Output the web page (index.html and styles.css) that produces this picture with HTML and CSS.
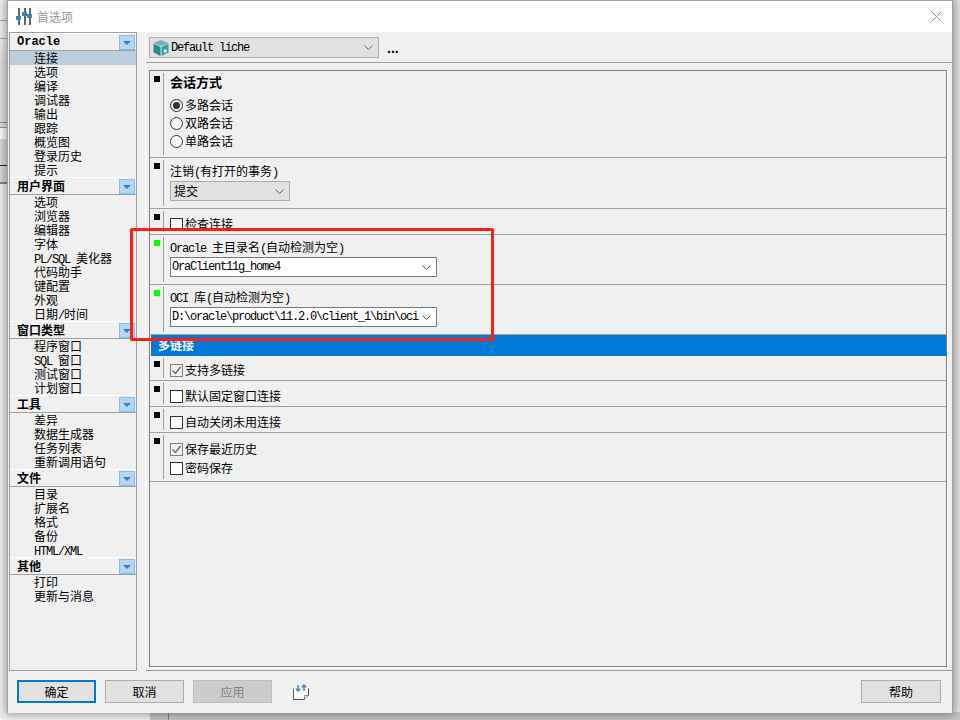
FILE: index.html
```html
<!DOCTYPE html>
<html lang="zh">
<head>
<meta charset="utf-8">
<title>首选项</title>
<link rel="stylesheet" href="styles.css">
</head>
<body>
<div class="dialog">
  <header class="titlebar">
    <svg class="title-icon" width="16" height="17" viewBox="0 0 16 17">
      <rect x="2" y="0" width="2" height="17" fill="#666"/>
      <rect x="8" y="0" width="2" height="17" fill="#666"/>
      <rect x="13" y="0" width="2" height="17" fill="#666"/>
      <rect x="0" y="8" width="5" height="4" fill="#3f7fc1"/>
      <rect x="6" y="4" width="5" height="4" fill="#3f7fc1"/>
      <rect x="11" y="6" width="5" height="4" fill="#3f7fc1"/>
    </svg>
    <span class="title-text">首选项</span>
    <svg class="close" width="11" height="11" viewBox="0 0 11 11"><path d="M.5.5l10 10M10.5.5l-10 10" stroke="#8a8a8a" fill="none"/></svg>
  </header>
  <div class="main">
    <nav class="side">
      <div class="side-head"><b class="lat-b">Oracle</b><i class="fold"></i></div>
      <div class="side-item current">连接</div>
      <div class="side-item">选项</div>
      <div class="side-item">编译</div>
      <div class="side-item">调试器</div>
      <div class="side-item">输出</div>
      <div class="side-item">跟踪</div>
      <div class="side-item">概览图</div>
      <div class="side-item">登录历史</div>
      <div class="side-item">提示</div>
      <div class="side-head"><b>用户界面</b><i class="fold"></i></div>
      <div class="side-item">选项</div>
      <div class="side-item">浏览器</div>
      <div class="side-item">编辑器</div>
      <div class="side-item">字体</div>
      <div class="side-item"><span class="lat">PL/SQL </span>美化器</div>
      <div class="side-item">代码助手</div>
      <div class="side-item">键配置</div>
      <div class="side-item">外观</div>
      <div class="side-item">日期<span class="lat">/</span>时间</div>
      <div class="side-head"><b>窗口类型</b><i class="fold"></i></div>
      <div class="side-item">程序窗口</div>
      <div class="side-item"><span class="lat">SQL </span>窗口</div>
      <div class="side-item">测试窗口</div>
      <div class="side-item">计划窗口</div>
      <div class="side-head"><b>工具</b><i class="fold"></i></div>
      <div class="side-item">差异</div>
      <div class="side-item">数据生成器</div>
      <div class="side-item">任务列表</div>
      <div class="side-item">重新调用语句</div>
      <div class="side-head"><b>文件</b><i class="fold"></i></div>
      <div class="side-item">目录</div>
      <div class="side-item">扩展名</div>
      <div class="side-item">格式</div>
      <div class="side-item">备份</div>
      <div class="side-item"><span class="lat">HTML/XML</span></div>
      <div class="side-head"><b>其他</b><i class="fold"></i></div>
      <div class="side-item">打印</div>
      <div class="side-item">更新与消息</div>
    </nav>
    <section class="panel">
      <div class="toolbar">
        <div class="select profile">
          <svg class="cube" width="16" height="16" viewBox="0 0 16 16">
            <path d="M8 0l7.5 3L8 6.2.5 3z" fill="#6fb5b8"/>
            <path d="M.5 3.6L7.5 7v9L.5 12.6z" fill="#2f8a90"/>
            <path d="M15.5 3.6L8.5 7v9l7-3.4z" fill="#3f9ea3"/>
            <path d="M11 9.5h2.5v3H11z" fill="#e8f4f4"/>
          </svg>
          <span class="lat">Default liche</span>
          <svg class="chev" width="9" height="5" viewBox="0 0 9 5"><path d="M.5.5l4 4 4-4" stroke="#666" fill="none"/></svg>
        </div>
        <b class="dots">...</b>
      </div>
      <div class="group">
        <div class="sec sec-session">
          <div class="mark"></div>
          <div class="body">
            <div class="sec-title">会话方式</div>
            <div class="radio-row"><i class="radio on"></i>多路会话</div>
            <div class="radio-row"><i class="radio"></i>双路会话</div>
            <div class="radio-row"><i class="radio"></i>单路会话</div>
          </div>
        </div>
        <div class="sec sec-logoff">
          <div class="mark"></div>
          <div class="body">
            <div class="label">注销<span class="lat">(</span>有打开的事务<span class="lat">)</span></div>
            <div class="select logoff"><span>提交</span>
              <svg class="chev" width="9" height="5" viewBox="0 0 9 5"><path d="M.5.5l4 4 4-4" stroke="#555" fill="none"/></svg>
            </div>
          </div>
        </div>
        <div class="sec sec-check">
          <div class="mark"></div>
          <div class="body">
            <div class="check-row"><i class="check"></i>检查连接</div>
          </div>
        </div>
        <div class="sec sec-path">
          <div class="mark green"></div>
          <div class="body">
            <div class="label"><span class="lat">Oracle </span>主目录名<span class="lat">(</span>自动检测为空<span class="lat">)</span></div>
            <div class="input"><span class="lat">OraClient11g_home4</span>
              <svg class="chev" width="9" height="5" viewBox="0 0 9 5"><path d="M.5.5l4 4 4-4" stroke="#555" fill="none"/></svg>
            </div>
          </div>
        </div>
        <div class="sec sec-path">
          <div class="mark green"></div>
          <div class="body">
            <div class="label"><span class="lat">OCI </span>库<span class="lat">(</span>自动检测为空<span class="lat">)</span></div>
            <div class="input"><span class="lat">D:\oracle\product\11.2.0\client_1\bin\oci</span>
              <svg class="chev" width="9" height="5" viewBox="0 0 9 5"><path d="M.5.5l4 4 4-4" stroke="#555" fill="none"/></svg>
            </div>
          </div>
        </div>
        <div class="bar">多链接</div>
        <div class="sec sec-one">
          <div class="mark"></div>
          <div class="body">
            <div class="check-row"><i class="check on"><svg width="11" height="11" viewBox="0 0 11 11"><path d="M1.5 5.5l3 3 5-6.5" stroke="#666" stroke-width="1.3" fill="none"/></svg></i>支持多链接</div>
          </div>
        </div>
        <div class="sec sec-two">
          <div class="mark"></div>
          <div class="body">
            <div class="check-row"><i class="check"></i>默认固定窗口连接</div>
          </div>
        </div>
        <div class="sec sec-two">
          <div class="mark"></div>
          <div class="body">
            <div class="check-row"><i class="check"></i>自动关闭未用连接</div>
          </div>
        </div>
        <div class="sec sec-history">
          <div class="mark"></div>
          <div class="body">
            <div class="check-row"><i class="check on"><svg width="11" height="11" viewBox="0 0 11 11"><path d="M1.5 5.5l3 3 5-6.5" stroke="#666" stroke-width="1.3" fill="none"/></svg></i>保存最近历史</div>
            <div class="check-row second"><i class="check"></i>密码保存</div>
          </div>
        </div>
      </div>
    </section>
  </div>
  <footer class="footer">
    <button class="btn primary">确定</button>
    <button class="btn">取消</button>
    <button class="btn disabled">应用</button>
    <svg class="save-icon" width="16" height="16" viewBox="0 0 16 16">
      <path d="M.5 4.5v11h11l4-4v-7" stroke="#555" fill="#fff"/>
      <path d="M11.5 15.5v-4h4" stroke="#888" fill="#eee"/>
      <path d="M5 1v6M2.8 4.6L5 7l2.2-2.4" stroke="#3f7fc1" stroke-width="1.4" fill="none"/>
      <path d="M11 7V1M8.8 3.4L11 1l2.2 2.4" stroke="#3f7fc1" stroke-width="1.4" fill="none"/>
    </svg>
    <button class="btn help">帮助</button>
  </footer>
</div>
<div class="annotation"></div>
</body>
</html>
```

FILE: styles.css
```css
* { box-sizing: border-box; }
html, body { margin: 0; height: 720px; overflow: hidden; }
body {
  font: 12px/14px "Noto Sans CJK SC", sans-serif;
  color: #000;
  background:
    linear-gradient(to bottom,
      transparent 20px, #aaa 20px, #aaa 21px, transparent 21px,
      transparent 38px, #aaa 38px, #aaa 39px, transparent 39px,
      #e4e4e4 62px, #e4e4e4 122px, #999 122px, #999 123px, #e4e4e4 123px,
      #e4e4e4 127px, #999 127px, #999 128px, #fff 128px,
      #fff 139px, #ddd 139px, #ddd 165px, #222 165px, #222 166px, #ddd 166px,
      #ddd 182px, #888 182px, #888 184px, #f4f4f4 184px) 0 0 / 8px 100% no-repeat,
    linear-gradient(#888, #888) 168px 712px / 1px 8px no-repeat,
    linear-gradient(#c8c8c8, #c8c8c8) 150px 712px / 810px 8px no-repeat,
    linear-gradient(#e8e8e8, #e8e8e8) 952px 0 / 8px 100% no-repeat,
    linear-gradient(#999, #999) 952px 17px / 8px 1px no-repeat,
    #f4f4f4;
  background-blend-mode: normal;
}
.lat, .lat-b {
  font-family: "Liberation Mono", monospace;
  letter-spacing: -1.2px;
}
.lat-b { letter-spacing: 0; font-weight: 700; }

.dialog {
  margin-left: 7px;
  width: 946px;
  height: 713px;
  border: 1px solid #a0a0a0;
  border-bottom: 0;
  background: #f0f0f0;
  display: flex;
  flex-direction: column;
  box-shadow: 0 0 9px 2px rgba(0,0,0,.38);
}
.titlebar {
  height: 31px;
  flex: none;
  background: #fff;
  display: flex;
  align-items: center;
  padding: 0 10px 0 8px;
}
.title-icon { margin-right: 5px; margin-top: -1px; }
.title-text { color: #999; font-size: 12px; }
.close { margin-left: auto; margin-top: -1px; }

.main { height: 639px; flex: none; display: flex; }

.side {
  width: 128px;
  margin-left: 1px;
  height: 639px;
  border: 1px solid #a0a0a0;
  flex: none;
}
.side-head {
  height: 18px;
  border-top: 1px solid #fff;
  border-bottom: 1px solid #a0a0a0;
  display: flex;
  align-items: center;
  justify-content: space-between;
  padding: 0 1px 0 7px;
}
.side-head b { font-weight: 700; font-size: 12px; }
.fold {
  width: 16px;
  height: 15px;
  background: #b5d7f6;
  border: 1px solid #86bdf0;
  position: relative;
}
.fold::after {
  content: "";
  position: absolute;
  left: 3px;
  top: 5px;
  border: 4px solid transparent;
  border-top: 4px solid #4a78b0;
  border-bottom: 0;
}
.side-item { height: 14px; padding-left: 24px; white-space: nowrap; }
.side-item.current { background: #bccddb; }

.panel {
  margin-left: 8px;
  flex: 1;
  border-left: 1px solid #fff;
  border-bottom: 1px solid #a0a0a0;
  display: flex;
  flex-direction: column;
  min-width: 0;
}
.toolbar {
  height: 31px;
  flex: none;
  border-bottom: 1px solid #a0a0a0;
  display: flex;
  align-items: flex-start;
  padding: 5px 0 0 3px;
}
.select {
  background: #e1e1e1;
  border: 1px solid #adadad;
  display: flex;
  align-items: center;
  height: 21px;
  position: relative;
}
.profile { width: 230px; padding-left: 3px; }
.cube { margin-right: 2px; }
.chev { position: absolute; top: 7px; right: 5px; }
.dots { margin: 1px 0 0 8px; font-size: 14px; font-family: "Liberation Sans", sans-serif; line-height: 20px; }

.group {
  margin: 7px 0 0 3px;
  width: 798px;
  height: 597px;
  border: 1px solid #808080;
  box-shadow: 1px 1px 0 #fff;
}
.sec {
  display: flex;
  border-bottom: 1px solid #a0a0a0;
  padding-top: 2px;
  overflow: hidden;
}
.sec-session { height: 87px; }
.sec-logoff { height: 51px; }
.sec-check { height: 26px; }
.sec-path { height: 50px; }
.sec-one { height: 25px; }
.sec-two { height: 26px; }
.sec-history { height: 49px; }
.mark {
  flex: none;
  width: 6px;
  height: 6px;
  margin: 3px 0 0 4px;
  background: #000;
}
.mark.green { background: #00ff00; }
.body {
  flex: 1;
  margin-left: 3px;
  padding-left: 6px;
  border-left: 1px solid #a0a0a0;
  height: calc(100% - 2px);
  min-width: 0;
}
.sec-title { font-weight: 700; font-size: 13px; line-height: 16px; margin: 1px 0 6px; }
.radio-row { height: 18px; display: flex; align-items: center; gap: 2px; }
.radio {
  width: 13px;
  height: 13px;
  border: 1px solid #333;
  border-radius: 50%;
  background: #fff;
  position: relative;
  flex: none;
}
.radio.on { background: #f0f0f0; }
.radio.on::after {
  content: "";
  position: absolute;
  left: 2px;
  top: 2px;
  width: 7px;
  height: 7px;
  border-radius: 50%;
  background: #333;
}
.label { height: 14px; margin-top: 3px; white-space: nowrap; }
.sec-logoff .label { margin-top: 4px; }
.logoff { width: 120px; height: 20px; margin-top: 3px; padding-left: 3px; }
.input {
  width: 267px;
  height: 20px;
  margin-top: 3px;
  background: #fff;
  border: 1px solid #7a7a7a;
  display: flex;
  align-items: center;
  padding-left: 1px;
  position: relative;
  white-space: nowrap;
}
.check-row { display: flex; align-items: center; gap: 2px; height: 14px; margin-top: 5px; white-space: nowrap; }
.sec-two .check-row { margin-top: 6px; }
.check-row.second { margin-top: 5px; }
.sec-history .check-row:first-child { margin-top: 7px; }
.sec-check .check-row { margin-top: 6px; }
.check {
  width: 13px;
  height: 13px;
  border: 1px solid #333;
  background: #fff;
  flex: none;
  display: flex;
}
.check.on { border-color: #808080; background: #f0f0f0; }
.bar {
  height: 21px;
  background: #0078d7;
  color: #fff;
  font-weight: 700;
  line-height: 20px;
  margin-left: 1px;
  padding-left: 7px;
}

.footer {
  flex: 1;
  display: flex;
  align-items: flex-start;
  padding: 9px 11px 0 9px;
  gap: 9px;
}
.btn {
  width: 79px;
  height: 23px;
  background: #e1e1e1;
  border: 1px solid #adadad;
  font: 12px/14px "Noto Sans CJK SC", sans-serif;
  color: #000;
  padding: 0;
}
.btn.primary { border: 2px solid #0078d7; }
.btn.disabled { background: #ccc; border-color: #bfbfbf; color: #838383; }
.btn.help { margin-left: auto; width: 80px; }
.save-icon { margin: 4px 0 0 12px; }

.annotation {
  position: absolute;
  left: 130px;
  top: 228px;
  width: 364px;
  height: 113px;
  border: 3px solid #fb1f13;
  border-radius: 2px;
}
```
